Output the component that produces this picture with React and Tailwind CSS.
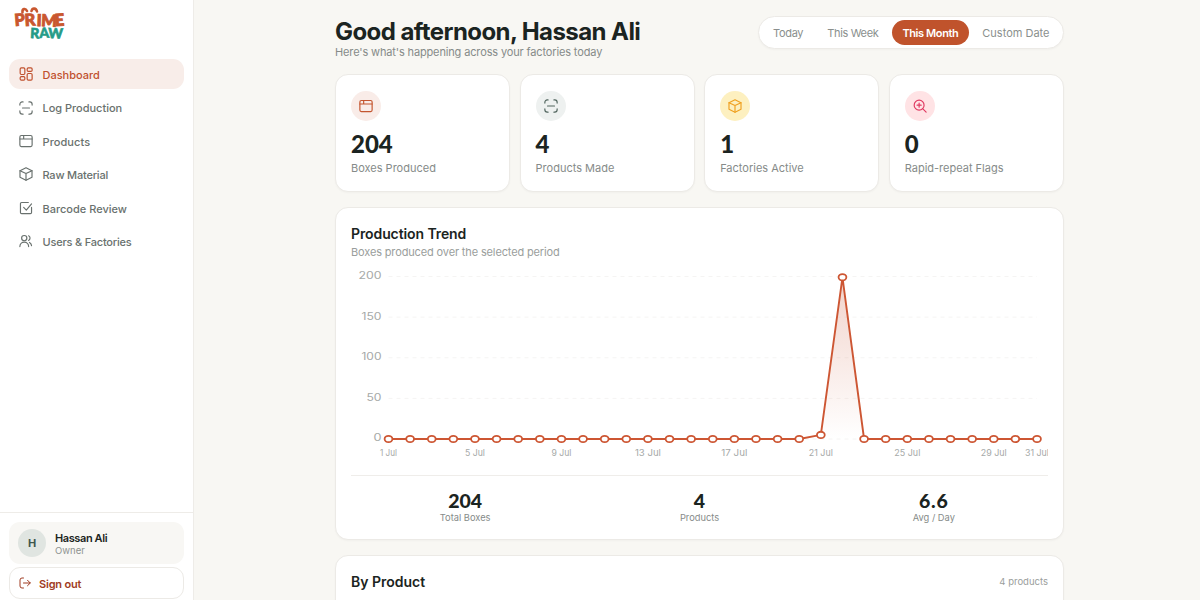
const days = Array.from({ length: 31 }, (_, i) => {
  const day = i + 1;
  const boxes = day === 21 ? 5 : day === 22 ? 199 : 0;
  return { day, boxes };
});

const icons = {
  dashboard: (
    <>
      <rect x="2" y="1.5" width="8" height="11.3" rx="2" />
      <rect x="14" y="1.5" width="8.5" height="6" rx="2" />
      <rect x="2" y="16.5" width="8" height="6" rx="2" />
      <rect x="14" y="11.2" width="8.5" height="11.3" rx="2" />
    </>
  ),
  scan: (
    <>
      <path d="M1.5 7V5.5a4 4 0 0 1 4-4H7M17 1.5h1.5a4 4 0 0 1 4 4V7M22.5 17v1.5a4 4 0 0 1-4 4H17M7 22.5H5.5a4 4 0 0 1-4-4V17" />
      <path d="M6 12h12" />
    </>
  ),
  box: (
    <>
      <rect x="1.5" y="2.5" width="21" height="19" rx="2.5" />
      <path d="M1.5 8.5h21M8 2.5v6" />
    </>
  ),
  cube: (
    <>
      <path d="M12 1.3 22.3 6.3v11.4L12 22.7 1.7 17.7V6.3Z" />
      <path d="M1.7 6.3 12 11.3l10.3-5M12 11.3v11.4" />
    </>
  ),
  check: (
    <>
      <path d="M21.5 11v8.5a2 2 0 0 1-2 2h-15a2 2 0 0 1-2-2v-15a2 2 0 0 1 2-2H16" />
      <path d="m8 11 4.5 4.5L21.5 5" />
    </>
  ),
  users: (
    <>
      <circle cx="9" cy="7" r="4.5" />
      <path d="M1.5 21.5a7.5 7.5 0 0 1 15 0M16.5 3a4.5 4.5 0 0 1 0 8M18 14.5a7 7 0 0 1 3.5 5.5" />
    </>
  ),
  zoom: (
    <>
      <circle cx="10.5" cy="10.5" r="8.5" />
      <path d="m16.5 16.5 6 6M10.5 7v7M7 10.5h7" />
    </>
  ),
  signout: (
    <>
      <path d="M9 2H6a4 4 0 0 0-4 4v12a4 4 0 0 0 4 4h3" />
      <path d="M9 12h13.5M17 6.5l5.5 5.5-5.5 5.5" />
    </>
  ),
};

const Icon = ({ name, className }) => (
  <svg
    viewBox="0 0 24 24"
    fill="none"
    stroke="currentColor"
    strokeWidth="2"
    strokeLinecap="round"
    strokeLinejoin="round"
    className={className}
  >
    {icons[name]}
  </svg>
);

const navItems = [
  { label: "Dashboard", icon: "dashboard", active: true, tracking: "tracking-[0px]" },
  { label: "Log Production", icon: "scan", tracking: "tracking-[-0.02px]" },
  { label: "Products", icon: "box", tracking: "tracking-[0.08px]" },
  { label: "Raw Material", icon: "cube", tracking: "tracking-[-0.2px]" },
  { label: "Barcode Review", icon: "check", tracking: "tracking-[0px]" },
  { label: "Users & Factories", icon: "users", tracking: "tracking-[-0.2px]" },
];

const stats = [
  { value: "204", label: "Boxes Produced", icon: "box", color: "bg-[#f9ece8] text-[#c4552f]" },
  { value: "4", label: "Products Made", icon: "scan", color: "bg-[#eef1f0] text-[#50645d]" },
  { value: "1", label: "Factories Active", icon: "cube", color: "bg-[#fdf0c0] text-[#f0a020]" },
  { value: "0", label: "Rapid-repeat Flags", icon: "zoom", color: "bg-[#ffe3e5] text-[#e03a62]" },
];

const periods = [
  { label: "Today", tracking: "tracking-[-0.3px]" },
  { label: "This Week", tracking: "tracking-[-0.35px]" },
  { label: "This Month", tracking: "tracking-[-0.4px]", active: true },
  { label: "Custom Date", tracking: "tracking-[0px]" },
];

const totals = [
  { value: "204", label: "Total Boxes", tracking: "tracking-[0px]" },
  { value: "4", label: "Products", tracking: "tracking-[0px]" },
  { value: "6.6", label: "Avg / Day", tracking: "tracking-[0.8px]" },
];

const Logo = () => (
  <svg
    viewBox="0 0 56 34"
    className="h-[34px] w-[56px] overflow-visible"
    fontFamily="Lato, sans-serif"
    fontWeight="900"
  >
    <text
      y="20"
      fontSize="16.5"
      x="2 12 23.5 28 42"
      rotate="-5 -4 2 3 -3"
      fill="#c9572f"
      stroke="#c9572f"
      strokeWidth="0.9"
    >
      PRIME
    </text>
    <path
      d="M9.500 6.500C9 2.500 12.500 2 14 5M18.500 5c1-3.500 4.500-3 5.500.5"
      fill="none"
      stroke="#c9572f"
      strokeWidth="2.600"
      strokeLinecap="round"
    />
    <text
      x="17 26.5 35"
      y="32"
      rotate="3 -2 2"
      fill="#259b87"
      stroke="#259b87"
      strokeWidth="0.6"
      fontSize="14"
    >
      RAW
    </text>
  </svg>
);

const Sidebar = () => (
  <aside className="flex h-full w-[194px] shrink-0 flex-col border-r border-[#eeece8] bg-white">
    <div className="h-[59px] pt-[6px] pl-[13px]">
      <Logo />
    </div>
    <nav className="flex flex-1 flex-col gap-[3px] px-[9px]">
      {navItems.map((item) => (
        <a
          key={item.label}
          className={`flex h-[30.4px] items-center gap-[9.5px] rounded-[11px] pl-[10px] text-[11px] font-medium ${item.tracking} ${
            item.active ? "bg-[#f8ede9] text-[#c0502d]" : "text-[#69716e]"
          }`}
        >
          <Icon name={item.icon} className="h-[14px] w-[14px]" />
          <span className="pt-[2px]">{item.label}</span>
        </a>
      ))}
    </nav>
    <div className="h-[88px] border-t border-[#eeece8] px-[9px] pt-[9px]">
      <div className="flex h-[42px] items-center rounded-[11px] bg-[#f8f7f4] pl-[9px]">
        <div className="flex h-7 w-7 items-center justify-center rounded-full bg-[#e0e5e1] text-[11px] font-bold text-[#40574e]">
          H
        </div>
        <div className="ml-[9px]">
          <p className="text-[11px] leading-[14px] font-semibold tracking-[-0.4px] text-[#1b2421]">Hassan Ali</p>
          <p className="text-[9.5px] leading-[11px] text-[#8e9391]">Owner</p>
        </div>
      </div>
      <button className="mt-[3px] flex h-[32px] w-full items-center gap-[8px] rounded-[11px] border border-[#eceae6] pl-[9px] text-[11px] font-semibold tracking-[-0.2px] text-[#a03c23]">
        <Icon name="signout" className="h-[12px] w-[12px]" />
        <span className="pt-[2px]">Sign out</span>
      </button>
    </div>
  </aside>
);

const TrendChart = () => {
  const px = (i) => 37.5 + i * 21.617;
  const py = (v) => 177 - v * 0.8125;
  const line = days.map((d, i) => `${px(i)},${py(d.boxes)}`).join(" ");

  return (
    <svg viewBox="0 0 697 200" className="h-[200px] w-[697px]">
      <defs>
        <linearGradient id="trend" x1="0" y1="0" x2="0" y2="1">
          <stop offset="0" stopColor="#c9502f" stopOpacity="0.25" />
          <stop offset="1" stopColor="#c9502f" stopOpacity="0" />
        </linearGradient>
      </defs>
      {[0, 50, 100, 150, 200].map((v) => (
        <g key={v}>
          <line x1="37.5" x2="686" y1={py(v)} y2={py(v)} stroke="#f5f4f3" strokeDasharray="4 4" />
          <text
            x="30.5"
            y={py(v) + 2.4}
            textAnchor="end"
            textLength={v === 0 ? 8 : v === 50 ? 15 : v === 200 ? 23 : 20}
            lengthAdjust="spacingAndGlyphs"
            fontSize="9.8"
            fill="#a6a9a8"
          >
            {v}
          </text>
        </g>
      ))}
      <polygon points={`${px(0)},177 ${line} ${px(30)},177`} fill="url(#trend)" />
      <polyline points={line} fill="none" stroke="#cd5633" strokeWidth="1.9" strokeLinejoin="round" />
      {days.map((d, i) => (
        <ellipse
          key={d.day}
          cx={px(i)}
          cy={py(d.boxes)}
          rx="3.9"
          ry="3.2"
          fill="#fff"
          stroke="#cd5633"
          strokeWidth="1.8"
        />
      ))}
      {[1, 5, 9, 13, 17, 21, 25, 29, 31].map((day) => (
        <text
          key={day}
          x={px(day - 1)}
          y="194"
          textAnchor="middle"
          textLength={day === 1 ? 17 : day < 10 ? 20 : day === 21 || day === 31 ? 24 : 26}
          lengthAdjust="spacingAndGlyphs"
          fontSize="9.4"
          fill="#a6a9a8"
        >
          {`${day} Jul`}
        </text>
      ))}
    </svg>
  );
};

const card = "rounded-[13px] border border-[#eceae6] bg-white shadow-[0_1px_2px_rgba(0,0,0,0.03)]";

const App = () => {
  return (
    <div className="flex h-[600px] w-[1200px] overflow-hidden bg-[#f8f7f3] font-['Inter',sans-serif] text-[#1b2421]">
      <Sidebar />
      <main className="flex-1 pt-[16px] pl-[141px]">
        <div className="w-[729px]">
          <header className="flex h-[58px] items-start justify-between">
            <div>
              <h1 className="pt-px text-[24px] leading-[29px] font-bold tracking-[-0.57px]">
                Good afternoon, Hassan Ali
              </h1>
              <p className="text-[11px] leading-[13px] tracking-[-0.14px] text-[#868b89]">
                Here's what's happening across your factories today
              </p>
            </div>
            <div className="flex h-[33px] items-center gap-[3px] rounded-full border border-[#eceae6] bg-white px-[3px] shadow-[0_1px_2px_rgba(0,0,0,0.03)]">
              {periods.map((p) => (
                <button
                  key={p.label}
                  className={`h-[25px] rounded-full px-[10.5px] pt-[2px] text-[11px] ${p.tracking} ${
                    p.active ? "bg-[#c0532c] font-semibold text-white" : "text-[#8a8f8d]"
                  }`}
                >
                  {p.label}
                </button>
              ))}
            </div>
          </header>

          <section className="grid grid-cols-4 gap-[9.3px]">
            {stats.map((s) => (
              <div key={s.label} className={`h-[117.5px] px-[15px] pt-[15.5px] ${card}`}>
                <div className={`flex h-[30px] w-[30px] items-center justify-center rounded-full ${s.color}`}>
                  <Icon name={s.icon} className="h-[14px] w-[14px]" />
                </div>
                <p className="mt-[8.5px] font-['Lato',sans-serif] text-[24px] leading-[29px] font-black">
                  {s.value}
                </p>
                <p className="mt-[3px] text-[11px] leading-[15px] text-[#868b89]">{s.label}</p>
              </div>
            ))}
          </section>

          <section className={`mt-[15px] h-[333.5px] px-[15px] pt-[16.5px] ${card}`}>
            <h2 className="text-[14px] leading-[20px] font-semibold tracking-[-0.1px]">Production Trend</h2>
            <p className="h-[18px] text-[11px] leading-[16px] tracking-[-0.14px] text-[#9a9e9c]">
              Boxes produced over the selected period
            </p>
            <TrendChart />
            <div className="mt-[13px] grid grid-cols-3 gap-[6px] border-t border-[#efedea] pt-[13px] text-center">
              {totals.map((t) => (
                <div key={t.label}>
                  <p className={`font-['Lato',sans-serif] text-[19.5px] leading-[23px] font-black ${t.tracking}`}>
                    {t.value}
                  </p>
                  <p className="text-[9.3px] leading-[11px] text-[#868b89]">{t.label}</p>
                </div>
              ))}
            </div>
          </section>

          <section className={`mt-[15px] flex h-[90px] items-start justify-between px-[15px] pt-[16px] ${card}`}>
            <h2 className="text-[14px] leading-[20px] font-semibold">By Product</h2>
            <p className="text-[9.5px] leading-[20px] text-[#9a9e9c]">4 products</p>
          </section>
        </div>
      </main>
    </div>
  );
};

export default App;
